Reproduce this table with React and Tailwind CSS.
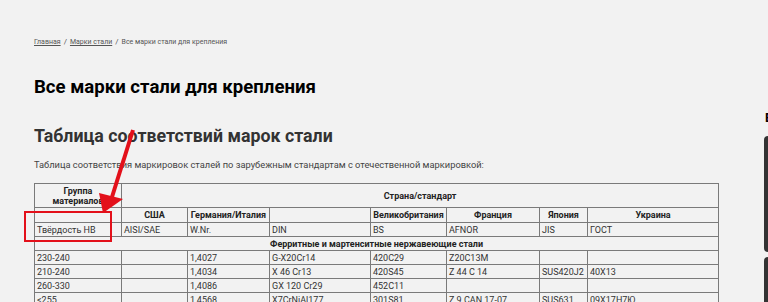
import React from "react";

const font = { fontFamily: "Roboto, 'Liberation Sans', sans-serif" };

const rows = [
  ["230-240", "", "1,4027", "G-X20Cr14", "420C29", "Z20C13M", "", ""],
  ["210-240", "", "1,4034", "X 46 Cr13", "420S45", "Z 44 C 14", "SUS420J2", "40X13"],
  ["260-330", "", "1,4086", "GX 120 Cr29", "452C11", "", "", ""],
  ["<255", "", "1,4568", "X7CrNiAl177", "301S81", "Z 9 CAN 17-07", "SUS631", "09X17H7Ю"],
];

const cell = "border border-[#7a7a7a] px-[2px] py-0 align-middle whitespace-nowrap overflow-hidden";
const head = cell + " font-bold text-center text-[#222]";

const Breadcrumbs = () => (
  <div className="text-[7px] leading-[10px] text-[#555]">
    <a className="underline">Главная</a>
    <span className="mx-[3px] text-[8px]">/</span>
    <a className="underline">Марки стали</a>
    <span className="mx-[3px] text-[8px]">/</span>
    <span>Все марки стали для крепления</span>
  </div>
);

const SteelTable = () => (
  <table className="table-fixed border-collapse w-[684px] text-[9px] leading-[10px] text-[#333]">
    <colgroup>
      <col className="w-[87px]" />
      <col className="w-[66px]" />
      <col className="w-[82px]" />
      <col className="w-[101px]" />
      <col className="w-[76px]" />
      <col className="w-[93px]" />
      <col className="w-[48px]" />
      <col className="w-[131px]" />
    </colgroup>
    <tbody>
      <tr className="h-[24px]">
        <td className={head}>Группа<br />материалов</td>
        <td className={head} colSpan={7}>Страна/стандарт</td>
      </tr>
      <tr className="h-[15px]">
        <td className={cell}></td>
        <td className={head}>США</td>
        <td className={head}>Германия/Италия</td>
        <td className={cell}></td>
        <td className={head}>Великобритания</td>
        <td className={head}>Франция</td>
        <td className={head}>Япония</td>
        <td className={head}>Украина</td>
      </tr>
      <tr className="h-[14px]">
        {["Твёрдость HB", "AISI/SAE", "W.Nr.", "DIN", "BS", "AFNOR", "JIS", "ГОСТ"].map((t, i) => (
          <td key={i} className={cell}>{t}</td>
        ))}
      </tr>
      <tr className="h-[14px]">
        <td className={head} colSpan={8}>Ферритные и мартенситные нержавеющие стали</td>
      </tr>
      {rows.map((r, ri) => (
        <tr key={ri} className="h-[14px]">
          {r.map((t, i) => (
            <td key={i} className={cell}>{t}</td>
          ))}
        </tr>
      ))}
    </tbody>
  </table>
);

export default function App() {
  return (
    <div className="relative flex h-[302px] w-[768px] overflow-hidden bg-[#f2f2f2]" style={font}>
      <main className="w-[764px] shrink-0 pl-[34px] pt-[37px]">
        <Breadcrumbs />
        <h1 className="mt-[29px] text-[18.6px] leading-[22px] font-bold text-black">Все марки стали для крепления</h1>
        <h2 className="mt-[27px] text-[17.8px] leading-[21px] font-bold text-[#333]">Таблица соответствий марок стали</h2>
        <p className="mt-[13px] text-[9.3px] leading-[12px] text-[#444]">
          Таблица соответствия маркировок сталей по зарубежным стандартам с отечественной маркировкой:
        </p>
        <div className="mt-[12px]">
          <SteelTable />
        </div>
      </main>
      <aside className="w-[4px] shrink-0 pt-[112px]">
        <div className="text-[13px] leading-[12px] font-bold text-black pl-[1px]">Е</div>
        <div className="mt-[12px] h-[116px] w-[10px] rounded-l-[4px] bg-[#333]"></div>
        <div className="mt-[5px] h-[60px] w-[10px] rounded-l-[4px] bg-[#333]"></div>
      </aside>

      {/* annotation */}
      <div className="absolute left-[24px] top-[211px] h-[31px] w-[88px] border-2 border-[#e3101a]"></div>
      <svg className="absolute left-0 top-0" width="768" height="302" viewBox="0 0 768 302">
        <line x1="133" y1="130" x2="112" y2="197" stroke="#e3101a" strokeWidth="4" />
        <polygon points="99,193 123,199 103,213" fill="#e3101a" />
      </svg>
    </div>
  );
}
